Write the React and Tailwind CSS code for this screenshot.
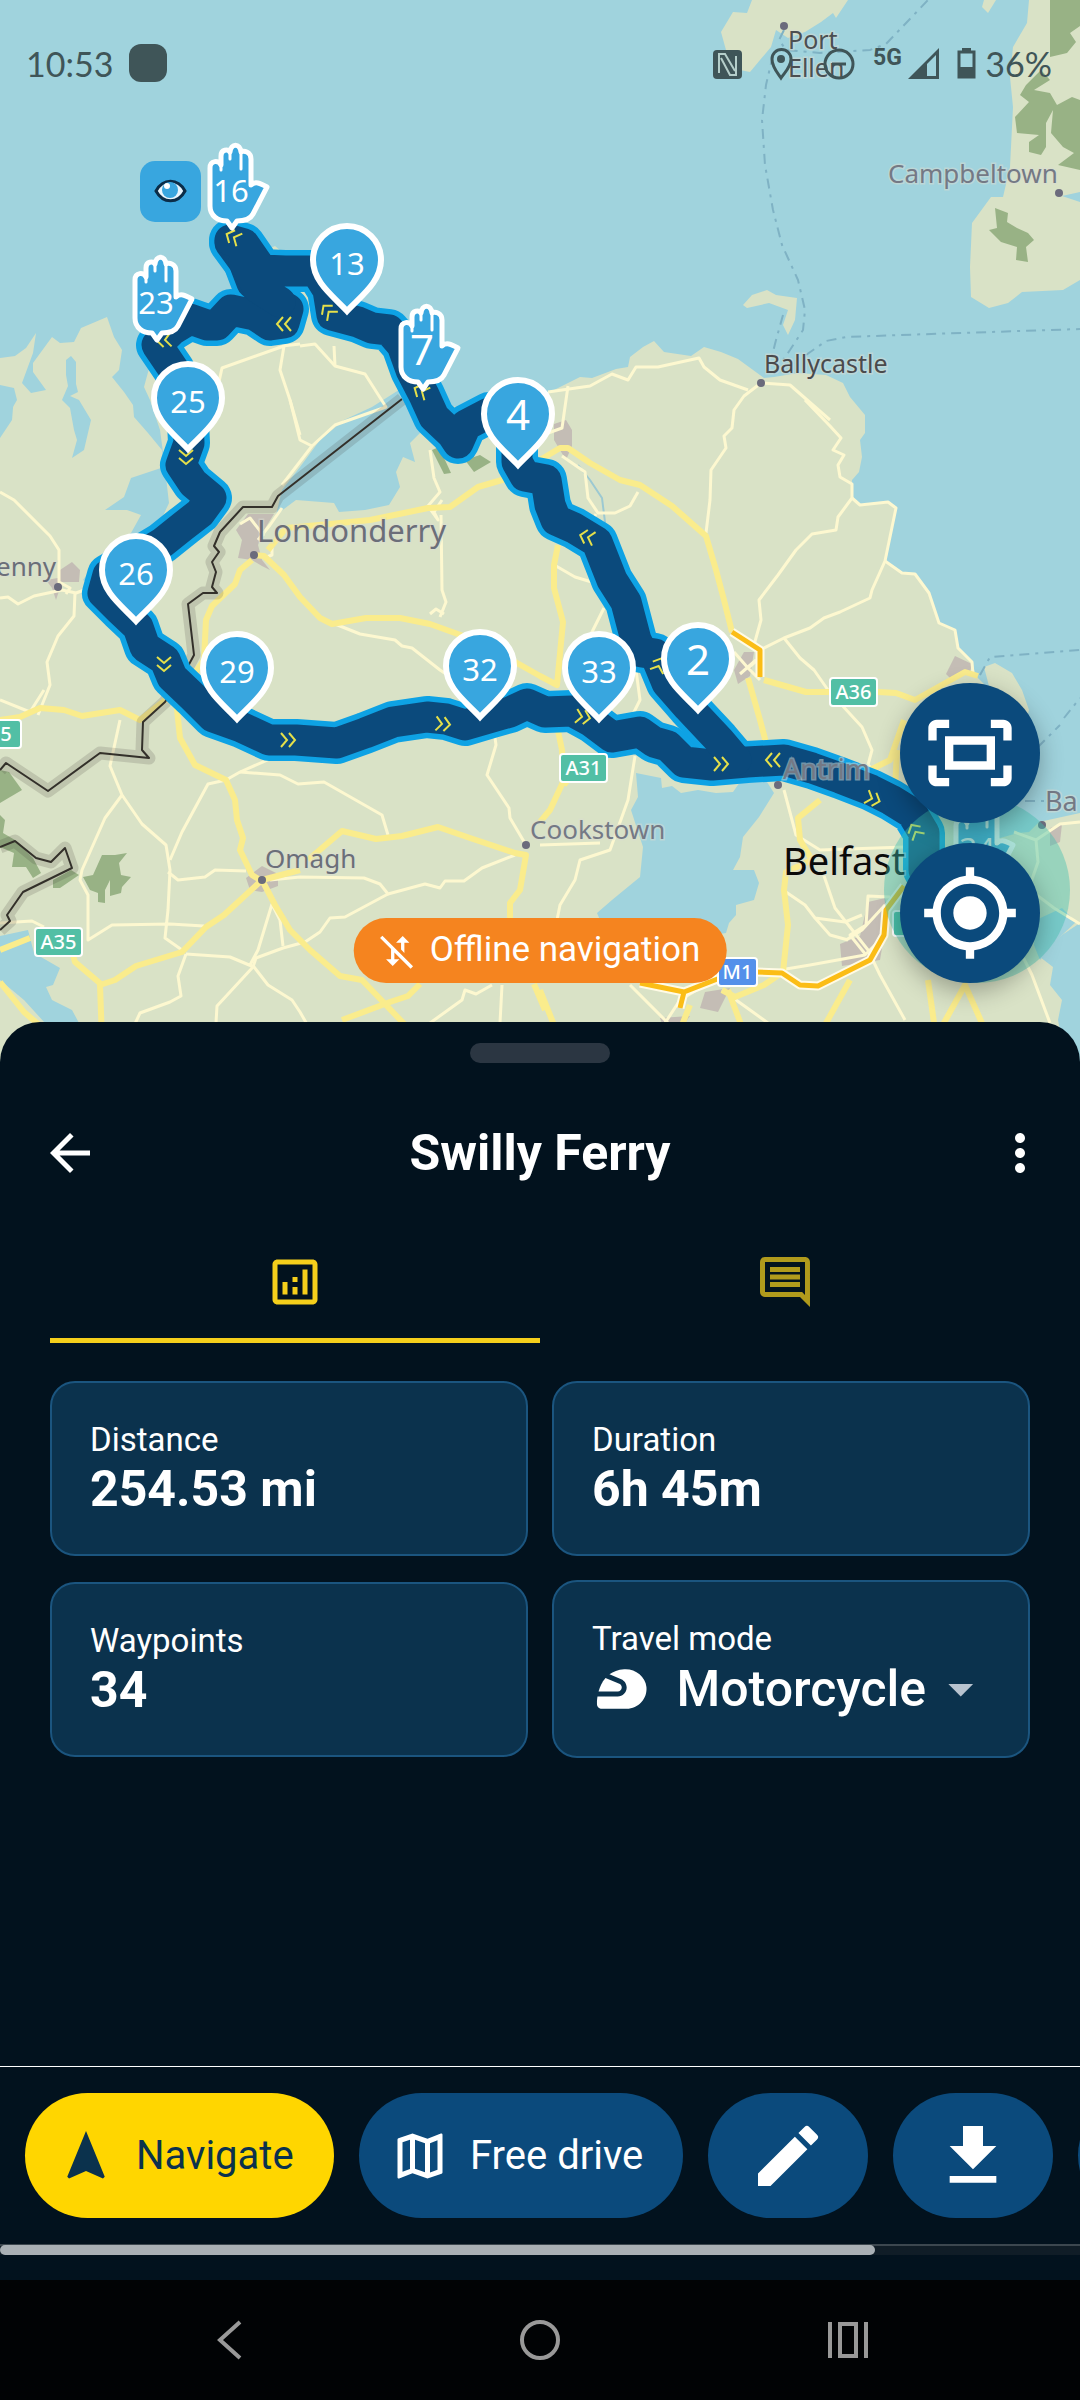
import { useState } from "react";
import {
  MdArrowBack,
  MdArrowDropDown,
  MdDownload,
  MdEdit,
  MdMobiledataOff,
  MdMoreVert,
  MdMyLocation,
  MdNavigation,
  MdOutlineAnalytics,
  MdOutlineComment,
  MdOutlineFitScreen,
  MdOutlineMap,
  MdSportsMotorsports,
} from "react-icons/md";

const LAND = [
  // Ireland
  "M0 358L15 356L26 348L36 333L33 353L22 383L31 393L46 390L33 372L33 363L52 337L60 343L74 342L81 328L107 317L114 337L122 350L119 370L112 377L124 392L133 405L134 417L148 433L162 450L164 467L131 478L124 497L105 510L127 510L141 515L131 533L103 553L83 580L90 584L130 555L155 533L169 503L164 460L160 430L150 400L144 387L150 365L165 340L180 335L200 315L232 302L236 288L258 262L266 250L275 246L282 252L310 262L330 290L360 310L396 330L408 350L402 388L372 407L344 420L320 440L300 467L282 490L276 515L296 500L334 503L339 512L365 510L389 505L400 487L396 472L403 457L415 462L410 443L420 433L410 402L420 390L440 400L458 408L482 397L520 394L550 392L580 377L592 378L616 369L628 367L630 357L643 347L654 341L664 352L691 356L704 347L721 352L738 359L764 378L774 377L798 373L826 375L843 383L850 397L865 415L865 433L860 440L862 457L859 472L852 480L852 498L860 505L888 502L896 508L886 562L902 573L915 574L929 593L939 623L955 630L958 648L972 662L976 676L990 690L984 667L995 663L1012 673L1022 690L1029 710L1020 745L1000 775L965 812L955 845L975 850L1000 838L1018 833L1029 832L1039 822L1080 813L1080 923L1062 935L1040 957L1053 967L1050 985L1062 1000L1058 1020L1066 1062L0 1062Z",
  // Islay, Gigha, Kintyre, Rathlin
  "M752 0L747 13L733 12L721 32L726 50L740 70L750 72L760 60L771 47L776 30L788 38L805 32L821 22L833 13L836 18L848 0Z",
  "M984 0L982 7L988 13L996 0Z",
  "M1029 0L1027 23L1013 47L1010 77L1013 107L1010 167L1003 197L991 197L972 223L970 267L971 297L989 308L1008 303L1022 292L1063 290L1080 280L1080 202L1062 196L1080 192L1080 0Z",
  "M743 305L752 295L767 290L776 295L797 298L795 320L788 335L783 325L788 310L769 303L747 308Z",
];

const WATER = [
  "M0 400L14 396L12 420L0 438Z",
  "M0 385L14 388L17 400L10 412L0 405Z",
  "M66 360L71 356L76 362L76 384L78 392L70 396L79 400L91 420L84 450L72 458L77 440L74 430L70 408L62 400L68 386L66 375Z",
  "M636 773L661 778L662 788L672 786L681 793L698 790L716 793L733 792L740 782L767 782L774 793L759 817L743 837L740 857L733 870L754 870L759 883L754 900L736 905L736 915L729 923L726 933L680 940L600 920L597 913L612 900L640 877L643 847L631 810L638 797Z",
  "M0 936L28 930L34 953L60 968L53 985L46 987L52 1000L72 1010L79 1023L84 1062L60 1040L45 1023L24 1000L0 980Z",
  "M1036 920L1062 908L1076 922L1062 935L1040 960L1034 945Z",
];

const FORESTS = [
  "M1050 0L1080 0L1080 26L1070 33L1076 42L1067 53L1050 57Z",
  "M1041 70L1050 80L1034 90L1050 93L1057 105L1072 97L1080 100L1080 170L1058 165L1074 153L1063 147L1051 133L1053 110L1046 123L1046 147L1041 155L1029 152L1029 142L1039 135L1017 133L1015 117L1029 102L1020 95L1026 85Z",
  "M995 208L1008 213L1007 222L1017 228L1028 233L1034 240L1026 247L1028 262L1016 260L1017 247L1001 242L989 230L997 228Z",
  "M0 770L9 772L22 790L0 803Z",
  "M0 815L5 820L3 833L15 840L33 858L41 873L33 878L26 867L12 867L14 853L0 847Z",
  "M53 880L71 870L79 875L60 888L53 888Z",
  "M83 877L93 875L102 855L115 855L127 853L119 863L121 875L131 877L122 887L121 893L110 896L110 880L105 890L105 903L98 902L98 893L90 890Z",
  "M432 450L439 447L451 473L444 474Z",
  "M465 460L480 455L491 462L474 472Z",
];

const TOWNS = [
  "M248 514L274 514L264 530L258 545L262 560L270 570L262 566L252 560L238 558L242 540L236 530Z",
  "M60 570L72 562L80 570L79 582L62 582L56 600L52 588L46 580L58 578Z",
  "M246 878L262 866L278 874L278 886L262 892L250 890Z",
  "M554 424L566 420L572 430L572 446L566 460L554 440Z",
  "M734 670L744 652L754 652L750 676L738 684Z",
  "M946 674L955 656L972 664L970 672L952 680Z",
  "M868 902L885 898L888 912L880 960L842 966L840 944L860 936Z",
  "M705 992L730 988L718 1012L700 1008Z",
  "M660 1018L690 1016L680 1030L664 1030Z",
  "M1050 828L1062 824L1060 842L1050 846Z",
];

const MINOR_ROADS = [
  "M215 400L222 368L284 346L280 370L290 400L300 435",
  "M300 346L315 344L335 366L365 374L386 407L335 425L312 446L282 485",
  "M335 366L334 346",
  "M282 346L300 344",
  "M290 400L300 440L312 446",
  "M0 492L14 500L50 536L59 550L59 582L70 588L66 594",
  "M0 598L8 597L18 604L34 596L62 590L76 593L90 588",
  "M75 593L74 616L58 636L47 662L50 685L38 715",
  "M430 450L434 478L440 492L428 506L438 520L434 512L442 500",
  "M441 515L442 590L446 602L440 617M430 614L436 609L444 614",
  "M320 618L360 634L395 640L402 646L412 648L440 670L470 690",
  "M282 508L270 525L258 540M272 540L272 555L264 558M240 524L250 518L264 536",
  "M548 392L590 386L612 374L628 380L636 367L658 367L699 358L704 367L720 380L748 390M761 383L790 385L830 420",
  "M568 386L562 428L540 436M761 383L744 396L734 410L732 428L724 436L726 448L711 470L710 500L706 533",
  "M805 400L830 426L841 438L833 450L844 455L838 465L840 477L852 484L852 498L838 517L836 530L812 534L796 550L778 575L759 600L761 620L754 645",
  "M852 498L860 505L888 502L896 508L885 561L872 590L870 598L840 612L824 618L810 628L784 638L760 650",
  "M885 561L902 573L915 574L929 593L939 623L955 630L958 648L972 662L973 675",
  "M784 638L800 658L814 670L828 690L862 727L872 750L868 765L895 790",
  "M562 456L585 472L588 498L598 513L615 513L630 506L638 492",
  "M596 514L590 524M556 566L575 577L595 583M604 608L590 636M636 670L640 700L630 720",
  "M120 720L110 766L122 795L142 824L166 845L170 870L168 910L165 938L182 950M122 795L105 818L82 870L80 880L88 895L88 940L112 925L170 924L204 926",
  "M272 758L240 772L226 780L208 784L182 832L170 860",
  "M240 772L280 775L298 784L324 782L382 815L388 835",
  "M168 872L178 880L205 877L215 870L246 871",
  "M270 880L300 877L364 878L380 884L388 894L425 884L440 888L445 881L464 881L482 868L515 855",
  "M388 894L345 917L330 918L320 932L305 942L283 948L256 958L253 967L217 1006L216 1023",
  "M272 904L258 950L250 965M272 904L280 920L283 946M186 954L230 957L254 967L268 985L292 1000L300 1012L308 1026",
  "M186 954L178 976L181 996L170 1002L140 1013L134 1026",
  "M494 730L496 745L487 775L509 808L510 818L526 845",
  "M635 756L628 800L610 850L580 860L575 880L560 905L556 925",
  "M540 845L600 843M0 700L30 712L44 690",
  "M502 985L500 1023M430 1023L462 1000L465 990L476 994L492 985M630 985L668 1023",
  "M784 790L796 835L820 850L905 847M822 870L835 908L868 950L880 975L905 1020",
  "M783 890L805 905L815 918L845 922L862 915M815 918L830 935L848 940",
  "M890 897L868 896L866 925L850 935L866 955M885 905L862 930L846 940M780 970L810 965L865 955L880 940",
  "M705 985L680 1000L665 1023M722 990L750 1010L768 1023",
  "M1080 822L1060 824L1036 840L1014 832M1036 840L1038 862L1030 885M1030 890L1054 908L1080 924M1022 955L1032 975L1050 1023",
  "M734 652L748 668L760 680M756 660L740 674M748 668L762 656",
  "M0 923L32 921L44 927",
];

const MAIN_ROADS = [
  "M254 555L264 556L284 575L300 597L320 618L332 624L366 618L400 618L430 624L480 642L540 676L557 685L563 622L554 588L554 565L558 545",
  "M268 550L286 528L330 524L370 520L428 508L450 507L478 487L502 480L540 460L560 448L568 448L590 463L620 480L640 485L672 506L706 536L716 570L724 600L732 632",
  "M252 560L240 570L235 584L212 606L206 620L204 660L176 700L180 738L195 765L226 780L235 800L237 820L243 838L240 850L252 875L260 880",
  "M0 720L20 717L40 708L64 710L82 716L120 710L140 720L165 700",
  "M262 880L224 915L206 927L182 952L136 966L115 980L100 985L102 1040",
  "M102 985L75 962L70 945M0 950L30 938M0 982L24 1012L45 1030",
  "M262 880L300 870M262 880L275 905L290 930L310 950L340 976L362 980L386 1005L410 1030",
  "M308 860L342 831L376 839L402 836L438 827L470 838L515 853L526 855L520 890L510 903L510 925",
  "M342 1020L390 1002L408 996L420 984",
  "M557 726L562 750L564 780L550 810L540 822M564 785L576 770L578 760",
  "M764 680L806 692L878 692L896 693L915 700L940 686L965 672L978 676M748 678L760 720L768 750",
  "M820 800L798 818L800 840L812 860L786 872L784 890L788 925L783 972L764 985L735 997L722 990",
  "M728 990L745 1035M540 990L560 1040M680 1030L690 1005M534 984L545 1010",
  "M904 720L890 760L870 770M895 790L897 750",
  "M928 980L935 1030M940 1030L965 985L985 1030M850 980L825 1025",
];

const MOTORWAYS = [
  "M732 632L760 650L760 677",
  "M756 972L782 973L800 985L818 986L870 960L884 935L886 910L904 886",
  "M640 983L684 992L720 978M684 992L680 1008",
];

const BORDERS = [
  "M402 399L278 496L272 507L243 507L220 532L214 546L219 552L212 562L216 572L212 587L217 593L203 593L188 604L194 655L186 670L165 702L143 722L142 750L149 758L100 753L48 791L6 763L0 770",
  "M0 847L15 841L36 858L51 862L65 848L72 868L23 892L7 915L10 921L0 930",
];

const FERRIES = [
  "M784 30L779 40L786 50L820 53L870 50L886 44L928 0",
  "M773 55L766 85L762 120L765 165L773 210L782 245L798 280L805 310L803 330L790 350L772 376",
  "M783 315L776 340L771 360",
  "M806 355L826 341L846 337L900 335L1080 329",
  "M980 675L990 657L1080 650M1064 718L1080 698M1020 765L1060 725M1025 801L1045 801",
];

const ROUTES = [
  "M924 870L924 833L912 813L891 800L871 790L840 778L812 768L784 760L747 762L712 765L684 762L668 746L654 742L640 732L612 737L592 722L572 711L545 712L527 704L510 712L492 717L465 725L446 719L427 717L393 722L365 733L337 743L296 740L269 740L241 727L213 717L193 697L172 677L165 660L145 647L138 627L120 610L103 593L108 575L134 560L162 543L182 527L200 513L211 498L193 483L181 465L189 443L187 400L174 370L157 345L172 330L190 319L207 325L217 325L231 310L255 315L270 325L284 323L288 309L272 300L252 283L244 262L230 243",
  "M244 262L258 288L280 302M230 240L244 244L262 270L285 271L316 271L328 290L332 315L358 322L372 328L389 330L402 345L411 370L424 395L434 417L452 434L458 443L466 425L489 413L517 420L517 462L525 476L546 480L550 505L556 520L574 528L597 542L612 580L626 602L636 640L642 652L655 654L667 683L688 707L719 740L736 760",
];

// x, y, heading in degrees clockwise from east
const CHEVRONS = [
  [233, 237, 205],
  [328, 311, 230],
  [284, 324, 180],
  [164, 340, 175],
  [421, 391, 205],
  [186, 457, 90],
  [164, 664, 90],
  [288, 740, 0],
  [443, 724, 5],
  [587, 537, 195],
  [659, 665, 290],
  [583, 717, 10],
  [721, 764, 0],
  [773, 760, 180],
  [873, 799, 20],
  [915, 831, 240],
];

const PINS = [
  ["13", 347, 315],
  ["25", 188, 453],
  ["4", 518, 469],
  ["26", 136, 625],
  ["29", 237, 723],
  ["32", 480, 721],
  ["33", 599, 723],
  ["2", 698, 714],
];

const HANDS = [
  ["16", 232, 230],
  ["23", 157, 342],
  ["7", 423, 391],
];

const SHIELDS = [
  ["A36", 829, 677, 49, "#52bfa5"],
  ["A31", 559, 753, 49, "#52bfa5"],
  ["A35", 34, 927, 49, "#52bfa5"],
  ["5", -10, 719, 32, "#52bfa5"],
  ["M1", 717, 957, 41, "#5490ea"],
];

const DOTS = [
  [784, 26],
  [1059, 193],
  [761, 383],
  [254, 555],
  [58, 587],
  [262, 880],
  [526, 845],
  [778, 785],
  [1042, 825],
];

const LABELS = [
  ["Port", 788, 49, 25, "#4b4f52"],
  ["Ellen", 788, 77, 25, "#4b4f52"],
  ["Campbeltown", 888, 183, 26, "#747985"],
  ["Ballycastle", 764, 373, 25, "#4a4a4c"],
  ["Londonderry", 257, 542, 31, "#6b6e79"],
  ["enny", -4, 576, 26, "#6b6e79"],
  ["Omagh", 265, 868, 26, "#6b6e79"],
  ["Cookstown", 530, 839, 26, "#747985"],
  ["Antrim", 783, 779, 27, "#747985"],
  ["Ba", 1045, 811, 27, "#747985"],
  ["Belfast", 783, 875, 38, "#0a0a0a"],
];

function Strokes({ paths, color, width, ...rest }) {
  return (
    <g fill="none" stroke={color} strokeWidth={width} strokeLinejoin="round" {...rest}>
      {paths.map((d) => (
        <path key={d} d={d} />
      ))}
    </g>
  );
}

function Shapes({ paths, color }) {
  return (
    <g fill={color}>
      {paths.map((d) => (
        <path key={d} d={d} />
      ))}
    </g>
  );
}

function MarkerNumber({ label, x, y }) {
  return (
    <text x={x} y={y} textAnchor="middle" fontSize={label.length > 1 ? 31 : 42} fill="#fff">
      {label}
    </text>
  );
}

function Pin({ label, x, y }) {
  return (
    <g transform={`translate(${x} ${y})`}>
      <path
        d="M0 -4C-14 -19 -34 -33 -34 -55A34 34 0 0 1 34 -55C34 -33 14 -19 0 -4Z"
        fill="#38a6df"
        stroke="#fff"
        strokeWidth="6"
      />
      <MarkerNumber label={label} x={0} y={label.length > 1 ? -40 : -39} />
    </g>
  );
}

function Hand({ label, x, y, opacity = 1 }) {
  return (
    <g transform={`translate(${x} ${y})`} opacity={opacity}>
      <path
        d="M0 -2L-5 -9C-14 -9 -22 -14 -22 -24L-22 -62C-22 -70 -13 -70 -11 -65L-11 -74C-11 -81 -4 -81 -2 -78C-1 -87 8 -87 9 -78C12 -80 19 -78 19 -71L19 -45C23 -49 28 -47 35 -43L21 -16C18 -10 12 -9 5 -9Z"
        fill="#38a6df"
        stroke="#fff"
        strokeWidth="5"
        strokeLinejoin="round"
      />
      <path d="M-11 -68V-60M-2 -78V-71M9 -78V-61" stroke="#fff" strokeWidth="3" strokeLinecap="round" />
      <MarkerNumber label={label} x={-1} y={label.length > 1 ? -28 : -26} />
    </g>
  );
}

function RouteMap() {
  return (
    <svg viewBox="0 0 1080 1062" className="block w-full font-['Noto_Sans',sans-serif]" role="img" aria-label="Route map">
      <rect width="1080" height="1062" fill="#a0d3dd" />
      <Shapes paths={LAND} color="#d9e2c6" />
      <Shapes paths={WATER} color="#a0d3dd" />
      <Shapes paths={FORESTS} color="#98b285" />
      <Shapes paths={TOWNS} color="#c4bdb5" />
      <Strokes paths={FERRIES} color="#7fb2c4" width="2" strokeDasharray="10 6 3 6" />
      <Strokes paths={["M578 465L590 480L602 498L606 530"]} color="#9cc9d2" width="2" />
      <Strokes paths={MINOR_ROADS} color="#fdf8d0" width="3" />
      <Strokes paths={MAIN_ROADS} color="#faec8c" width="6" />
      <Strokes paths={MOTORWAYS} color="#fffbe6" width="9" />
      <Strokes paths={MOTORWAYS} color="#fbbd16" width="5" />
      <Strokes paths={BORDERS} color="#3b3430" width="13" opacity="0.16" />
      <Strokes paths={BORDERS} color="#33302a" width="2" />

      <Strokes paths={ROUTES} color="#0ea2e4" width="42" strokeLinecap="round" />
      <Strokes paths={ROUTES} color="#0b4a7c" width="31" strokeLinecap="round" />
      {CHEVRONS.map(([x, y, angle]) => (
        <path
          key={`${x}-${y}`}
          d="M-7 -7L-1 0L-7 7M1 -7L7 0L1 7"
          transform={`translate(${x} ${y}) rotate(${angle})`}
          fill="none"
          stroke="#e5e04a"
          strokeWidth="2"
        />
      ))}

      {DOTS.map(([x, y]) => (
        <circle key={`${x}-${y}`} cx={x} cy={y} r="4" fill="#6b6b7c" />
      ))}
      {LABELS.map(([text, x, y, size, color]) => (
        <text
          key={text}
          x={x}
          y={y}
          fontSize={size}
          fill={color}
          stroke="#d9dcd2"
          strokeOpacity="0.5"
          strokeWidth="3"
          paintOrder="stroke"
        >
          {text}
        </text>
      ))}
      {SHIELDS.map(([text, x, y, w, color]) => (
        <g key={text}>
          <rect x={x + 1} y={y + 1} width={w - 2} height="28" rx="3" fill={color} stroke="#fff" strokeWidth="2" />
          <text x={x + w / 2} y={y + 22} textAnchor="middle" fontSize="20" fontWeight="500" fill="#fff">
            {text}
          </text>
        </g>
      ))}

      <rect x="893" y="911" width="40" height="25" rx="3" fill="#52bfa5" stroke="#fff" strokeWidth="2" />
      <Hand label="34" x={978} y={888} opacity={0.9} />
      <circle cx="977" cy="890" r="93" fill="#3fbfae" fillOpacity="0.42" />

      {PINS.map(([label, x, y]) => (
        <Pin key={label} label={label} x={x} y={y} />
      ))}
      {HANDS.map(([label, x, y]) => (
        <Hand key={label} label={label} x={x} y={y} />
      ))}

      <g transform="translate(140 161)">
        <rect width="61" height="61" rx="15" fill="#38a6df" />
        <path d="M16 30C23 17 38 17 45 30C38 43 23 43 16 30Z" fill="#e8f5fc" stroke="#0b2d48" strokeWidth="3" />
        <circle cx="30" cy="29" r="8" fill="#38a6df" />
        <circle cx="27" cy="25" r="3" fill="#fff" />
      </g>
    </svg>
  );
}

function StatusBar() {
  return (
    <div className="absolute inset-x-0 top-[38px] flex h-[50px] items-center justify-between pl-[26px] pr-7 font-['Lato',sans-serif] text-[34px] text-[#3f5558]">
      <div className="flex items-center gap-4">
        <span>10:53</span>
        <span className="h-[38px] w-[38px] rounded-xl bg-[#3f5558]" />
      </div>
      <svg viewBox="0 0 270 36" className="ml-auto h-9 w-[270px]" fill="none" stroke="#3f5558">
        <rect x="2" y="5" width="29" height="29" rx="4" fill="#3f5558" stroke="none" />
        <path d="M8 28V9L14 9L24 26M10 13L19 30H25V11" stroke="#b5ceca" strokeWidth="2" />
        <path d="M70 33C66 27 61 22 61 14A9 9 0 0 1 80 14C80 22 74 27 70 33Z" strokeWidth="3" />
        <circle cx="70" cy="14" r="4" fill="#3f5558" stroke="none" />
        <circle cx="128" cy="19" r="14" strokeWidth="3" />
        <path d="M121 19H135" strokeWidth="3" />
        <text x="162" y="20" fontSize="23" fontWeight="700" fill="#3f5558" stroke="none" className="font-['Roboto',sans-serif]">
          5G
        </text>
        <path d="M197 34L228 3V34Z" fill="#3f5558" stroke="none" />
        <path d="M216 19L225 10V31H216Z" fill="#a0d3dd" stroke="none" />
        <path d="M248 7H263V32H248Z" strokeWidth="3" />
        <path d="M251 3H260V7H251ZM247 22H264V33H247Z" fill="#3f5558" stroke="none" />
      </svg>
      <span className="ml-1">36%</span>
    </div>
  );
}

function MapButton({ label, children }) {
  return (
    <button
      type="button"
      aria-label={label}
      className="flex h-[140px] w-[140px] items-center justify-center rounded-full bg-[#0b4a7c] text-[100px] text-white shadow-[0_8px_24px_rgba(0,0,0,0.3)]"
    >
      {children}
    </button>
  );
}

function StatCard({ label, value }) {
  return (
    <div className="self-center rounded-[25px] border-2 border-[#1b557f] bg-[#0b324d] px-[38px] pb-[35px] pt-[38px]">
      <div className="text-[33px] leading-[38px]">{label}</div>
      <div className="text-[50px] font-bold leading-[60px]">{value}</div>
    </div>
  );
}

function TravelModeCard() {
  const [mode, setMode] = useState("motorcycle");

  return (
    <div className="rounded-[25px] border-2 border-[#1b557f] bg-[#0b324d] px-[38px] pb-9 pt-[38px]">
      <label htmlFor="travel-mode" className="block text-[33px] leading-[38px]">
        Travel mode
      </label>
      <div className="flex h-[62px] items-center">
        <MdSportsMotorsports className="mr-[25px] text-[60px]" />
        <select
          id="travel-mode"
          value={mode}
          onChange={(e) => setMode(e.target.value)}
          className="appearance-none bg-transparent p-0 text-[50px] font-medium leading-[59px] text-white"
        >
          <option value="motorcycle">Motorcycle</option>
        </select>
        <MdArrowDropDown className="pointer-events-none ml-1 text-[60px] text-[#b8c3cf]" />
      </div>
    </div>
  );
}

function Sheet() {
  const [tab, setTab] = useState("stats");
  const tabs = [
    { id: "stats", label: "Statistics", Icon: MdOutlineAnalytics },
    { id: "comments", label: "Comments", Icon: MdOutlineComment },
  ];

  return (
    <section className="relative -mt-10 flex grow flex-col rounded-t-[40px] bg-[#02121e] px-[50px] pt-[21px]">
      <div className="h-5 w-[140px] self-center rounded-full bg-[#2b3642]" />
      <header className="-ml-2.5 -mr-5 mt-[30px] flex h-[120px] items-center text-[60px]">
        <button type="button" aria-label="Back">
          <MdArrowBack />
        </button>
        <h1 className="grow pr-2.5 text-center text-[50px] font-bold">Swilly Ferry</h1>
        <button type="button" aria-label="More options">
          <MdMoreVert />
        </button>
      </header>

      <div className="grid grid-cols-2">
        {tabs.map(({ id, label, Icon }) => (
          <button
            key={id}
            type="button"
            aria-label={label}
            onClick={() => setTab(id)}
            className={`flex h-[130px] items-center justify-center border-b-5 pt-3 text-[60px] ${
              tab === id ? "border-[#f5cf1b] text-[#f5cf1b]" : "border-transparent text-[#b09a1c]"
            }`}
          >
            <Icon />
          </button>
        ))}
      </div>

      <div className="mt-[38px] grid grid-cols-2 gap-6">
        <StatCard label="Distance" value="254.53 mi" />
        <StatCard label="Duration" value="6h 45m" />
        <StatCard label="Waypoints" value="34" />
        <TravelModeCard />
      </div>
    </section>
  );
}

function ActionBar() {
  return (
    <div className="border-t border-white bg-[#02121e] pb-[25px]">
      <div className="flex gap-[25px] overflow-hidden py-[26px] pl-[25px] text-[40px]">
        <button type="button" className="flex h-[125px] w-[309px] shrink-0 items-center gap-5 rounded-full bg-[#ffd600] pl-[31px] text-[#0b324d]">
          <MdNavigation className="text-[60px]" />
          Navigate
        </button>
        <button type="button" className="flex h-[125px] w-[324px] shrink-0 items-center gap-5 rounded-full bg-[#0b4a7c] pl-[31px]">
          <MdOutlineMap className="text-[60px]" />
          Free drive
        </button>
        <button type="button" aria-label="Edit" className="flex h-[125px] w-40 shrink-0 items-center justify-center rounded-full bg-[#0b4a7c] text-[80px]">
          <MdEdit />
        </button>
        <button type="button" aria-label="Download" className="flex h-[125px] w-40 shrink-0 items-center justify-center rounded-full bg-[#0b4a7c] text-[80px]">
          <MdDownload />
        </button>
        <button type="button" aria-label="More" className="h-[125px] w-40 shrink-0 rounded-full bg-[#0b4a7c]" />
      </div>
      <div className="h-[11px] border-t-2 border-[#3c474f] bg-[#101d27]">
        <div className="-mt-px h-2.5 w-[81%] rounded-full bg-[#a9b0b5]" />
      </div>
    </div>
  );
}

function SystemNav() {
  return (
    <nav className="flex h-[120px] items-center justify-center gap-[250px] bg-[#010305]">
      <button type="button" aria-label="System back">
        <svg viewBox="0 0 60 60" className="h-[60px] w-[60px]" fill="none" stroke="#999" strokeWidth="4">
          <path d="M40 12L20 30L40 48" />
        </svg>
      </button>
      <button type="button" aria-label="Home">
        <svg viewBox="0 0 60 60" className="h-[60px] w-[60px]" fill="none" stroke="#999" strokeWidth="4">
          <circle cx="30" cy="30" r="18" />
        </svg>
      </button>
      <button type="button" aria-label="Recent apps">
        <svg viewBox="0 0 60 60" className="h-[60px] w-[60px]" fill="none" stroke="#999" strokeWidth="4">
          <path d="M10 12V48M46 12V48M20 14H36V46H20Z" />
        </svg>
      </button>
    </nav>
  );
}

export default function App() {
  return (
    <main className="flex min-h-screen flex-col bg-[#02121e] font-['Roboto',sans-serif] text-white">
      <div className="relative">
        <RouteMap />
        <StatusBar />
        <div className="absolute bottom-[79px] right-10 flex flex-col gap-5">
          <MapButton label="Fit route">
            <MdOutlineFitScreen />
          </MapButton>
          <MapButton label="My location">
            <MdMyLocation />
          </MapButton>
        </div>
        <div className="absolute bottom-[79px] left-1/2 flex h-[65px] -translate-x-1/2 items-center gap-3 rounded-full bg-[#f5841f] pl-6 pr-[26px] text-[35px]">
          <MdMobiledataOff className="text-[40px]" />
          Offline navigation
        </div>
      </div>
      <Sheet />
      <ActionBar />
      <SystemNav />
    </main>
  );
}
